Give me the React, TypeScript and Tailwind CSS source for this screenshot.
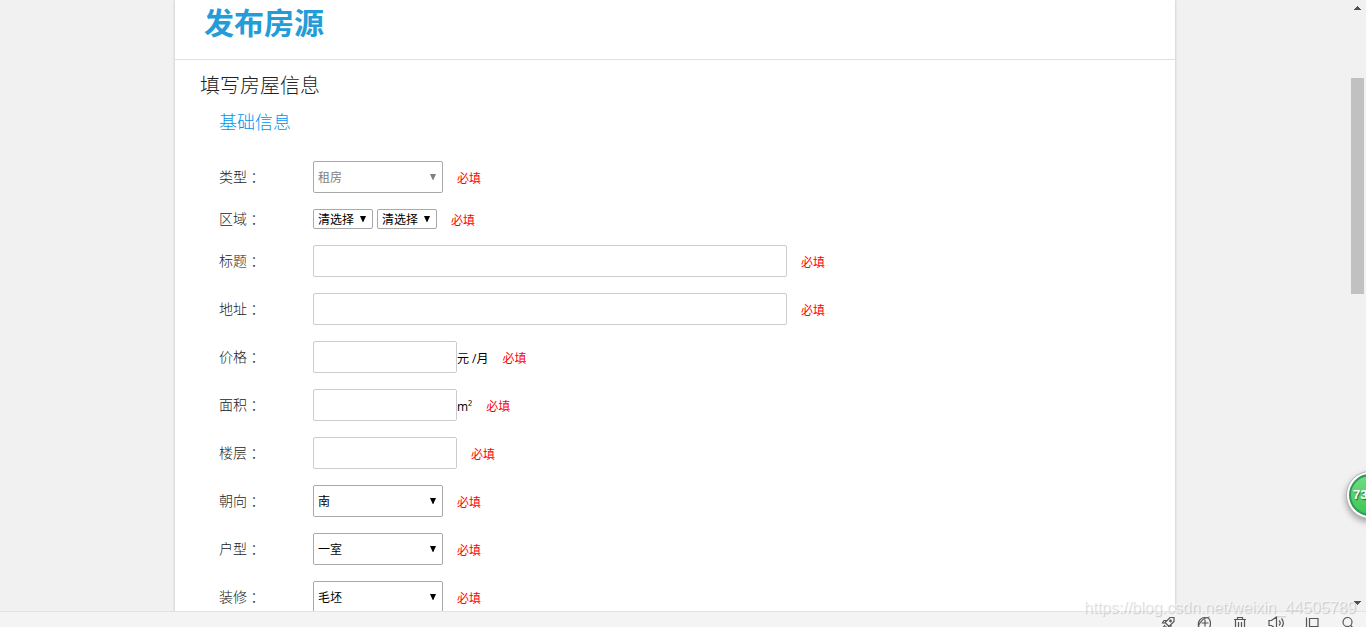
import React from 'react';
import { clsx } from 'clsx';

interface SelectBoxProps {
  id: string;
  options: string[];
  small?: boolean;
  disabled?: boolean;
  label?: string;
}

const SelectBox: React.FC<SelectBoxProps> = ({ id, options, small, disabled, label }) => (
  <div className={clsx('relative', small ? 'w-[60px]' : 'w-[130px]')}>
    <select
      id={id}
      aria-label={label}
      disabled={disabled}
      className={clsx(
        'block w-full appearance-none rounded-xs border border-[#a9a9a9] bg-white pt-0.5 pl-1 text-xs',
        small ? 'h-5' : 'h-8',
        disabled ? 'text-[#808080]' : 'text-black',
      )}
    >
      {options.map((option) => (
        <option key={option}>{option}</option>
      ))}
    </select>
    <svg
      viewBox="0 0 6 6"
      className={clsx('pointer-events-none absolute top-1/2 right-[7px] size-1.5 -translate-y-1/2', disabled ? 'text-[#808080]' : 'text-black')}
    >
      <path d="M0 0h6L3.3 6h-.6z" fill="currentColor" />
    </svg>
  </div>
);

const TextBox: React.FC<{ id: string; wide?: boolean }> = ({ id, wide }) => (
  <input
    id={id}
    type="text"
    className={clsx('h-8 rounded-xs border border-[#ccc] bg-white px-1 text-xs', wide ? 'w-[474px]' : 'w-36')}
  />
);

interface FieldRowProps {
  id: string;
  label: string;
  children: React.ReactNode;
}

const FieldRow: React.FC<FieldRowProps> = ({ id, label, children }) => (
  <div className="flex items-center">
    <label htmlFor={id} className="flex w-[94px] shrink-0 text-sm leading-5 font-light text-[#222]">
      {label}
      <span lang="zh-TW" className="font-['Noto_Sans_CJK_TC',sans-serif]">：</span>
    </label>
    {children}
    <span className="ml-3.5 pt-1 text-xs leading-4 text-[#f00]">必填</span>
  </div>
);

const StatusBar: React.FC = () => (
  <footer className="flex h-4 shrink-0 justify-end gap-[22px] overflow-hidden border-t border-[#e3e3e3] bg-[#f4f4f4] pt-1 pr-[11px] text-[#555]">
    <button type="button" aria-label="加速" className="size-3.5">
      <svg viewBox="0 0 14 14" fill="none" stroke="currentColor" strokeWidth="1.2">
        <path d="M13 1.500H9L4 6.500l4 4L13 5.500zM6 4.500H3L1.500 7h2.700M10 8.500v3L7.500 13v-2.700M4 9L1.500 12.500 5.500 10.500" />
        <circle cx="9.500" cy="5" r="0.800" />
      </svg>
    </button>
    <button type="button" aria-label="浏览器" className="size-3.5">
      <svg viewBox="0 0 14 14" fill="none" stroke="currentColor" strokeWidth="1.2">
        <path d="M2.500 12C-.5 7 3 1.500 8 1.500c3.500 0 5.500 2.500 5.500 6 0 2-.5 3.500-1.500 4.500M4.500 7h7M8 3.500v7M1 10.500C3 6 7 1.500 12.500 1" />
      </svg>
    </button>
    <button type="button" aria-label="清理" className="size-3.5">
      <svg viewBox="0 0 14 14" fill="none" stroke="currentColor" strokeWidth="1.2">
        <path d="M1 3.500h12M4.500 3.500v-2h5v2M2.500 3.500v10h9v-10M5.500 6v6M8.500 6v6" />
      </svg>
    </button>
    <button type="button" aria-label="声音" className="size-3.5">
      <svg viewBox="0 0 14 14" fill="none" stroke="currentColor" strokeWidth="1.2" className="overflow-visible">
        <path d="M0 4.500h2.500L7.500 1v12L2.500 9.500H0zM10 4.500c1.500 1.500 1.500 3.500 0 5M12.500 2.500c2.500 3 2.500 6 0 9" />
      </svg>
    </button>
    <button type="button" aria-label="窗口" className="size-3.5">
      <svg viewBox="0 0 14 14" fill="none" stroke="currentColor" strokeWidth="1.2">
        <path d="M1.500 1.500v12M4.500 2.500h8.500v8H4.500z" />
      </svg>
    </button>
    <button type="button" aria-label="搜索" className="size-3.5">
      <svg viewBox="0 0 14 14" fill="none" stroke="currentColor" strokeWidth="1.2">
        <circle cx="6.500" cy="6" r="4.500" />
        <path d="M9.700 9.500L13 13" />
      </svg>
    </button>
  </footer>
);

const ScrollRail: React.FC = () => (
  <div className="flex w-4 shrink-0 flex-col items-center bg-[#f1f1f1] py-1.5 pr-0.5">
    <svg viewBox="0 0 7 4" className="h-1 w-[7px] text-[#505050]">
      <path d="M3 0h1v1h1v1h1v1h1v1H0V3h1V2h1V1h1z" fill="currentColor" />
    </svg>
    <div className="mt-[68px] h-[216px] w-[13px] bg-[#c1c1c1]" />
    <svg viewBox="0 0 7 4" className="mt-auto h-1 w-[7px] text-[#505050]">
      <path d="M0 0h7v1H6v1H5v1H4v1H3V3H2V2H1V1H0z" fill="currentColor" />
    </svg>
  </div>
);

const App: React.FC = () => {
  return (
    <div
      lang="zh-CN"
      className="relative flex h-screen flex-col overflow-hidden bg-[#f1f1f1] font-['Open_Sans','Noto_Sans_CJK_SC',sans-serif] text-xs text-black"
    >
      <div className="flex min-h-0 flex-1">
        <main className="min-w-0 flex-1 overflow-hidden">
          <div className="mx-auto min-h-full max-w-[1000px] bg-white shadow-[0_0_3px_rgba(0,0,0,0.22)]">
            <div className="border-b border-[#e0e0e0] px-[29px] pt-[3px] pb-4">
              <h1 className="text-3xl leading-10 font-bold text-[#239cd8]">发布房源</h1>
            </div>

            <h2 className="mt-2.5 ml-[25px] text-xl leading-8 font-light text-[#222]">填写房屋信息</h2>
            <form className="ml-11">
              <h3 className="mt-1.5 text-lg leading-7 font-light text-[#0094f0]">基础信息</h3>

              <div className="mt-[25px] flex flex-col gap-4">
                <FieldRow id="type" label="类型">
                  <SelectBox id="type" options={['租房']} disabled />
                </FieldRow>
                <FieldRow id="area" label="区域">
                  <div className="flex gap-1">
                    <SelectBox id="area" options={['清选择']} small />
                    <SelectBox id="street" options={['清选择']} small label="区域" />
                  </div>
                </FieldRow>
                <FieldRow id="title" label="标题">
                  <TextBox id="title" wide />
                </FieldRow>
                <FieldRow id="address" label="地址">
                  <TextBox id="address" wide />
                </FieldRow>
                <FieldRow id="price" label="价格">
                  <TextBox id="price" />
                  <span className="pt-1 leading-4">元 /月</span>
                </FieldRow>
                <FieldRow id="size" label="面积">
                  <TextBox id="size" />
                  <span className="pt-1 leading-4">m²</span>
                </FieldRow>
                <FieldRow id="floor" label="楼层">
                  <TextBox id="floor" />
                </FieldRow>
                <FieldRow id="direction" label="朝向">
                  <SelectBox id="direction" options={['南']} />
                </FieldRow>
                <FieldRow id="rooms" label="户型">
                  <SelectBox id="rooms" options={['一室']} />
                </FieldRow>
                <FieldRow id="decoration" label="装修">
                  <SelectBox id="decoration" options={['毛坯']} />
                </FieldRow>
              </div>
            </form>
          </div>
        </main>
        <ScrollRail />
      </div>

      <StatusBar />

      {/* Floating speed ball */}
      <div className="absolute -right-7 bottom-[108px] size-12 rounded-full border border-[#b5b5b5] bg-white p-0.5 shadow-[0_3px_6px_rgba(0,0,0,0.35)]">
        <div className="flex size-full items-center rounded-full border-2 border-[#2f9a58] bg-linear-to-b from-[#6fdc80] to-[#3cc653] pl-0.5 font-['Liberation_Sans',sans-serif] text-[13px] font-bold text-white [text-shadow:1px_1px_1px_rgba(0,0,0,0.5)]">
          73
        </div>
      </div>

      {/* Watermark */}
      <div className="pointer-events-none absolute right-2.5 bottom-[7px] font-['Liberation_Sans',sans-serif] text-base leading-6 text-white/60 [text-shadow:1px_1px_1px_rgba(0,0,0,0.18)]">
        https://blog.csdn.net/weixin_44505789
      </div>
    </div>
  );
};

export default App;
